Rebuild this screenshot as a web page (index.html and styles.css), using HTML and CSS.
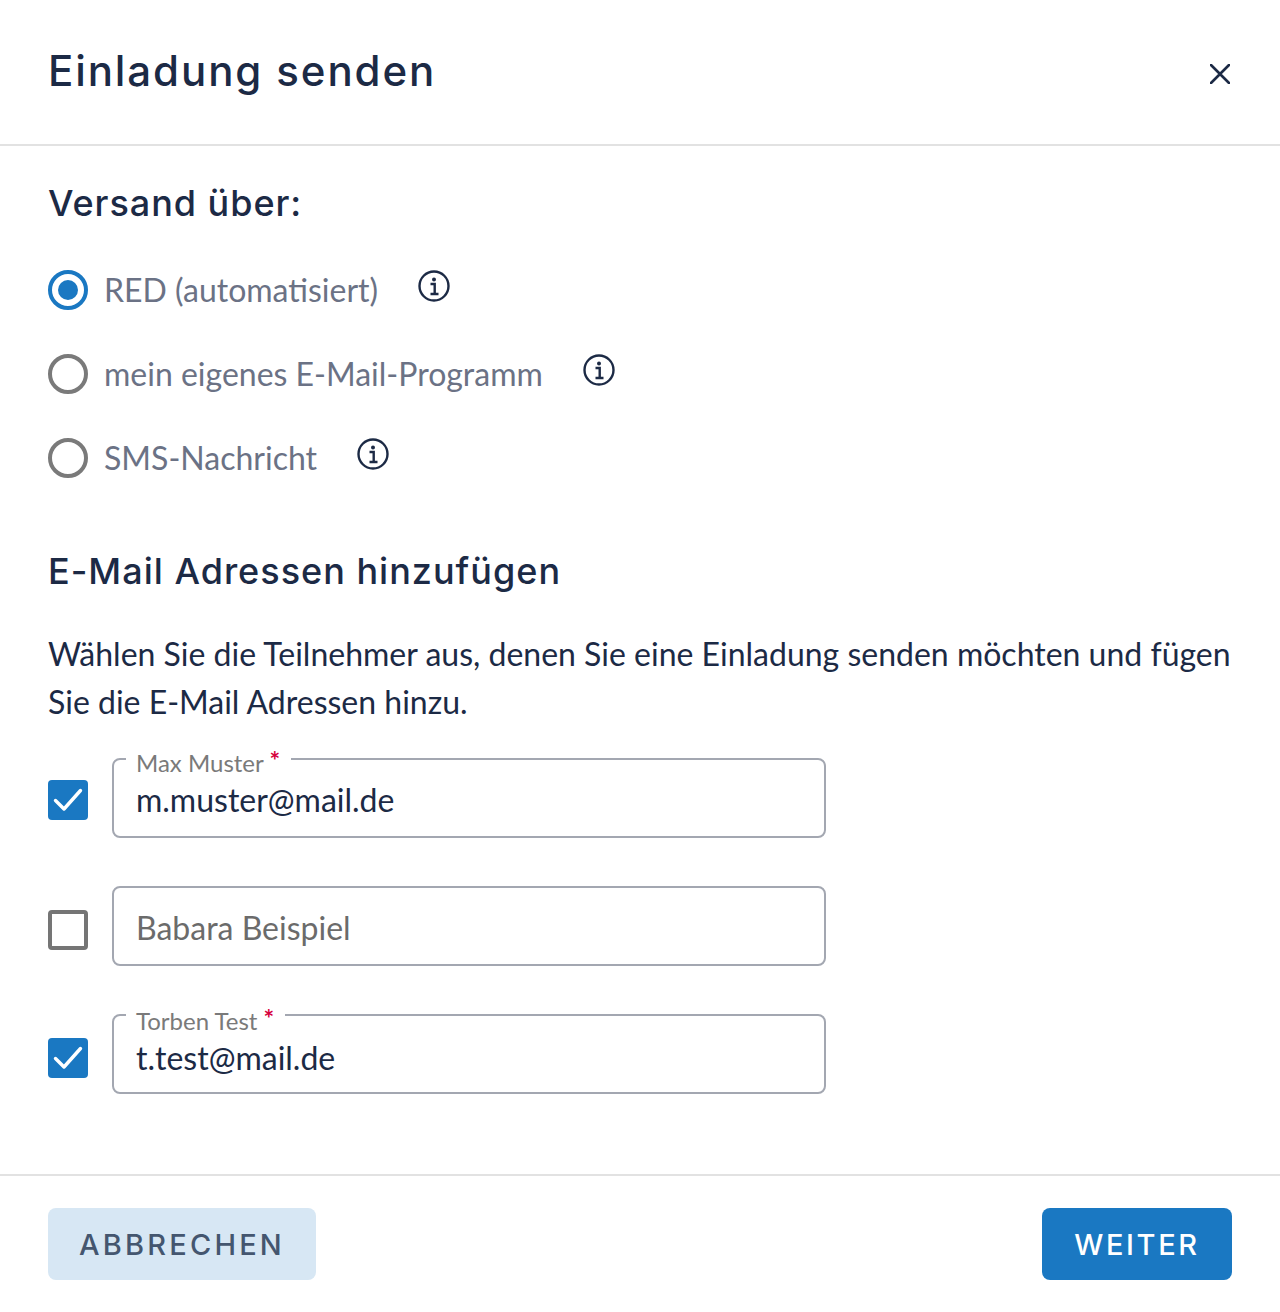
FILE: index.html
```html
<!DOCTYPE html>
<html lang="de">
<head>
<meta charset="utf-8">
<title>Einladung senden</title>
<link rel="stylesheet" href="styles.css">
</head>
<body>
<div class="dialog">
  <header class="head">
    <h1 class="title">Einladung senden</h1>
    <svg class="close" viewBox="0 0 20 20" width="20" height="20"><path d="M1 1 19 19M19 1 1 19"/></svg>
  </header>
  <main class="body">
    <h2 class="h-versand">Versand über:</h2>
    <div class="radios">
      <div class="radio-row">
        <span class="radio on"></span><span class="radio-label">RED (automatisiert)</span>
        <svg class="info" viewBox="0 0 32 32" width="32" height="32"><circle cx="16" cy="16" r="14.5"/><circle class="dot" cx="16" cy="9.5" r="2"/><path d="M12.5 14h4.2v9.5M12.5 24h8"/></svg>
      </div>
      <div class="radio-row">
        <span class="radio"></span><span class="radio-label">mein eigenes E-Mail-Programm</span>
        <svg class="info" viewBox="0 0 32 32" width="32" height="32"><circle cx="16" cy="16" r="14.5"/><circle class="dot" cx="16" cy="9.5" r="2"/><path d="M12.5 14h4.2v9.5M12.5 24h8"/></svg>
      </div>
      <div class="radio-row">
        <span class="radio"></span><span class="radio-label">SMS-Nachricht</span>
        <svg class="info" viewBox="0 0 32 32" width="32" height="32"><circle cx="16" cy="16" r="14.5"/><circle class="dot" cx="16" cy="9.5" r="2"/><path d="M12.5 14h4.2v9.5M12.5 24h8"/></svg>
      </div>
    </div>
    <h2 class="h-mail">E-Mail Adressen hinzufügen</h2>
    <p class="intro">Wählen Sie die Teilnehmer aus, denen Sie eine Einladung senden möchten und fügen Sie die E-Mail Adressen hinzu.</p>
    <div class="rows">
      <div class="row">
        <span class="check on first"><svg viewBox="0 0 40 40" width="40" height="40"><path d="M7.5 20.5 16 29 32.5 10.5"/></svg></span>
        <div class="field">
          <span class="legend">Max Muster <span class="req">*</span></span>
          <span class="value">m.muster@mail.de</span>
        </div>
      </div>
      <div class="row">
        <span class="check"></span>
        <div class="field"><span class="placeholder">Babara Beispiel</span></div>
      </div>
      <div class="row">
        <span class="check on"><svg viewBox="0 0 40 40" width="40" height="40"><path d="M7.5 20.5 16 29 32.5 10.5"/></svg></span>
        <div class="field low">
          <span class="legend">Torben Test <span class="req">*</span></span>
          <span class="value">t.test@mail.de</span>
        </div>
      </div>
    </div>
  </main>
  <footer class="foot">
    <button class="btn secondary">ABBRECHEN</button>
    <button class="btn primary">WEITER</button>
  </footer>
</div>
</body>
</html>
```
FILE: styles.css
```css
* { box-sizing: border-box; }
html, body { margin: 0; padding: 0; background: #fff; }
body { font-family: "Lato", "Liberation Sans", sans-serif; color: #1c2a45; }
.dialog { width: 1280px; height: 1312px; display: flex; flex-direction: column; }
.head { height: 146px; border-bottom: 2px solid #e2e2e2; padding: 0 50px 0 48px; display: flex; align-items: center; justify-content: space-between; }
.title { margin: 0 0 2px; font-family: "Inter", sans-serif; font-weight: 500; font-size: 42px; line-height: 48px; letter-spacing: 1.9px; color: #1c2a45; }
.close { stroke: #1c2a45; stroke-width: 2.6; stroke-linecap: round; fill: none; margin-top: 4px; }
.body { flex: 1; padding: 0 48px; }
.h-versand { margin: 34px 0 0; font-family: "Inter", sans-serif; font-weight: 500; font-size: 36px; line-height: 46px; letter-spacing: 0.95px; color: #1c2a45; }
.radios { margin-top: 44px; display: flex; flex-direction: column; gap: 44px; }
.radio-row { display: flex; align-items: center; height: 40px; }
.radio { width: 40px; height: 40px; border-radius: 50%; border: 4px solid #7a7a7a; position: relative; flex: none; }
.radio.on { border-color: #1a78c2; }
.radio.on::after { content: ""; position: absolute; left: 6px; top: 6px; width: 20px; height: 20px; border-radius: 50%; background: #1a78c2; }
.radio-label { margin-left: 16px; font-size: 32px; line-height: 40px; color: #6b7285; }
.info { margin: -8px 0 0 40px; fill: none; stroke: #1c2a45; stroke-width: 2.4; flex: none; }
.info .dot { fill: #1c2a45; stroke: none; }
.h-mail { margin: 70px 0 0; font-family: "Inter", sans-serif; font-weight: 500; font-size: 36px; line-height: 46px; letter-spacing: 1px; color: #1c2a45; }
.intro { margin: 36px 0 0; font-size: 32px; line-height: 48px; color: #1c2a45; }
.rows { margin-top: 32px; display: flex; flex-direction: column; gap: 48px; }
.row { display: flex; align-items: center; }
.check { width: 40px; height: 40px; border-radius: 4px; border: 4px solid #757575; flex: none; position: relative; margin-top: 8px; }
.check.first { margin-top: 4px; }
.check.on { background: #1a78c2; border: 0; }
.check svg { display: block; fill: none; stroke: #fff; stroke-width: 3.4; stroke-linecap: round; stroke-linejoin: round; }
.field { margin-left: 24px; width: 714px; height: 80px; border: 2px solid #a3a7b1; border-radius: 8px; padding: 0 22px; position: relative; display: flex; align-items: center; font-size: 32px; }
.legend { position: absolute; left: 12px; top: -12px; padding: 0 11px 0 10px; background: #fff; font-size: 24px; line-height: 30px; height: 24px; color: #7a7a7a; }
.req { color: #d6003c; font-size: 25px; font-weight: 700; line-height: 0; vertical-align: 2px; }
.value { color: #1c2a45; margin-top: 4px; line-height: 40px; }
.low .legend { top: -10px; }
.low .value { margin-top: 8px; }
.placeholder { color: #6b6b6b; line-height: 40px; margin-top: 4px; }
.foot { height: 138px; border-top: 2px solid #e2e2e2; padding: 32px 48px 0; display: flex; justify-content: space-between; align-items: flex-start; }
.btn { height: 72px; border: 0; border-radius: 8px; font-family: "Inter", sans-serif; font-weight: 500; font-size: 29px; }
.secondary { width: 268px; background: #d7e7f4; color: #44566f; letter-spacing: 3.2px; }
.primary { width: 190px; background: #1a78c2; color: #fff; letter-spacing: 2.6px; }
```
